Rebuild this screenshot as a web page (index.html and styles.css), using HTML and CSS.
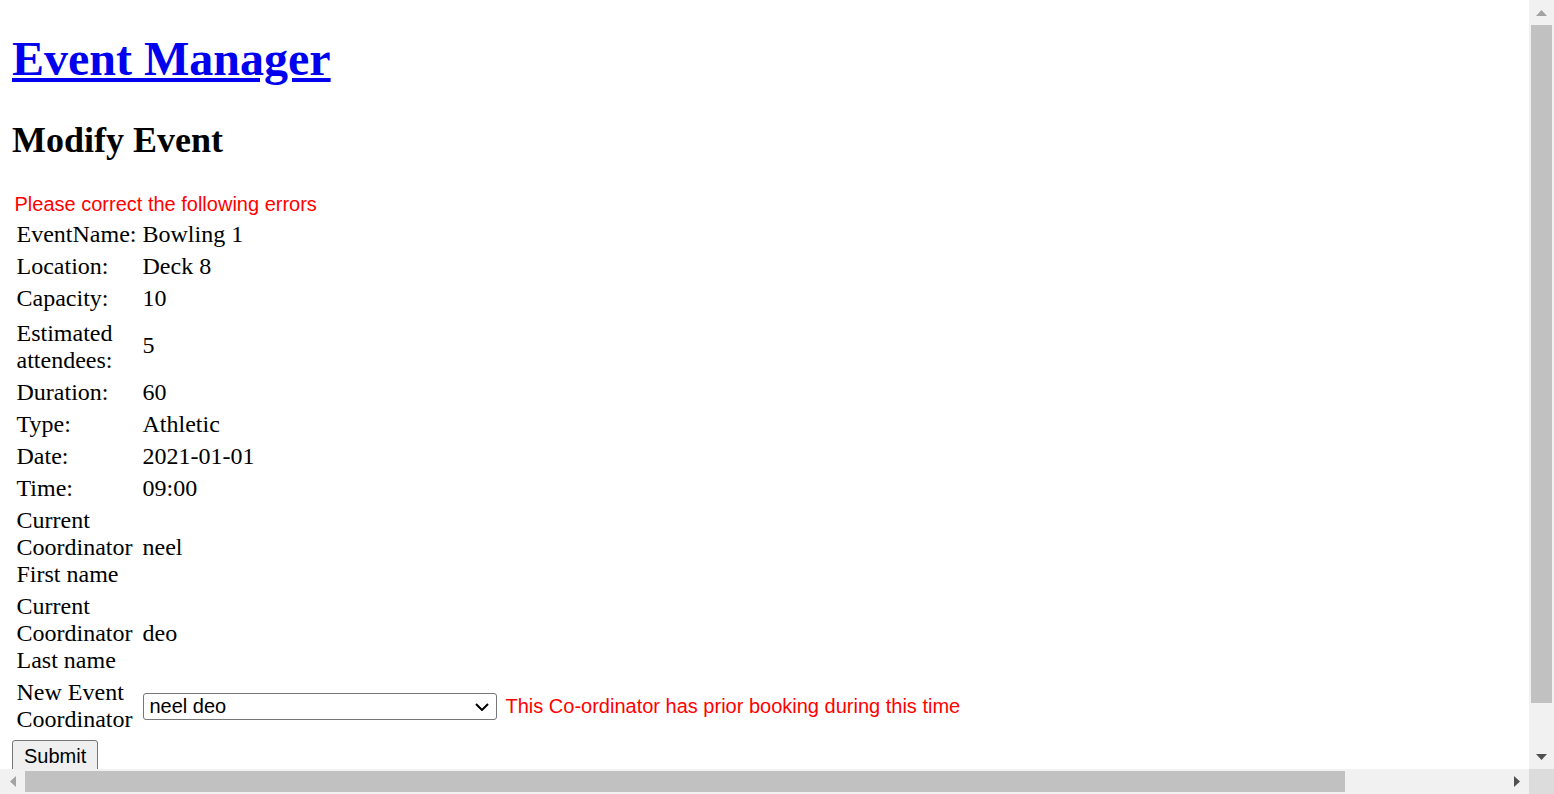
FILE: index.html
```html
<!DOCTYPE html>
<html lang="en">
<head>
<meta charset="utf-8">
<title>Event Manager - Modify Event</title>
<link rel="stylesheet" href="styles.css">
</head>
<body>
<h1 class="site-title"><a href="#">Event Manager</a></h1>
<h2 class="page-title">Modify Event</h2>
<form class="event-form">
  <div class="form-error">Please correct the following errors</div>
  <table class="details">
    <tr><td class="label">EventName:</td><td class="value">Bowling 1</td></tr>
    <tr><td class="label">Location:</td><td class="value">Deck 8</td></tr>
    <tr><td class="label">Capacity:</td><td class="value">10</td></tr>
    <tr class="tall-row"><td class="label">Estimated attendees:</td><td class="value">5</td></tr>
    <tr><td class="label">Duration:</td><td class="value">60</td></tr>
    <tr><td class="label">Type:</td><td class="value">Athletic</td></tr>
    <tr><td class="label">Date:</td><td class="value">2021-01-01</td></tr>
    <tr><td class="label">Time:</td><td class="value">09:00</td></tr>
    <tr><td class="label">Current Coordinator First name</td><td class="value">neel</td></tr>
    <tr><td class="label">Current Coordinator Last name</td><td class="value">deo</td></tr>
    <tr>
      <td class="label">New Event Coordinator</td>
      <td class="value">
        <div class="select-row">
          <span class="select-wrap">
            <select class="coordinator-select">
              <option>neel deo</option>
            </select>
            <svg class="chevron" width="14" height="8" viewBox="0 0 14 8"><path d="M1 1 L7 7 L13 1" fill="none" stroke="#000" stroke-width="2"/></svg>
          </span>
          <span class="field-error">This Co-ordinator has prior booking during this time</span>
        </div>
      </td>
    </tr>
  </table>
  <button type="submit" class="submit-btn">Submit</button>
</form>

<div class="vscroll" aria-hidden="true">
  <div class="sb-btn"><svg width="11" height="6" viewBox="0 0 11 6"><polygon points="0,6 5.5,0 11,6" fill="#a3a3a3"/></svg></div>
  <div class="vtrack"><div class="vthumb"></div></div>
  <div class="sb-btn"><svg width="11" height="6" viewBox="0 0 11 6"><polygon points="0,0 11,0 5.5,6" fill="#505050"/></svg></div>
</div>
<div class="hscroll" aria-hidden="true">
  <div class="sb-btn"><svg width="6" height="11" viewBox="0 0 6 11"><polygon points="6,0 6,11 0,5.5" fill="#a3a3a3"/></svg></div>
  <div class="htrack"><div class="hthumb"></div></div>
  <div class="sb-btn"><svg width="6" height="11" viewBox="0 0 6 11"><polygon points="0,0 6,5.5 0,11" fill="#505050"/></svg></div>
</div>
<div class="sb-corner" aria-hidden="true"></div>
</body>
</html>
```
FILE: styles.css
```css
html {
  background: #fff;
}
body {
  margin: 12px;
  font-family: "Liberation Serif", "Times New Roman", serif;
  font-size: 24px;
  color: #000;
}
.site-title {
  font-size: 48px;
  font-weight: bold;
  margin: 19px 0 33px;
}
.site-title a {
  color: #0000ee;
  text-decoration: underline;
}
.page-title {
  font-size: 36px;
  font-weight: bold;
  margin: 30px 0;
}
.event-form {
  margin: 0;
}
.form-error {
  font-family: "Liberation Sans", Arial, sans-serif;
  font-size: 20px;
  line-height: 23px;
  color: #ff0000;
  padding: 2px 0 0 2.5px;
}
.details {
  border-collapse: separate;
  border-spacing: 3px;
  margin-top: 1px;
}
.details td {
  padding: 1px 1.5px;
  line-height: 27px;
  vertical-align: middle;
}
.details .label {
  width: 120px;
}
.details .tall-row .label {
  padding-top: 4px;
}
.select-row {
  display: flex;
  align-items: center;
  gap: 9px;
}
.select-wrap {
  position: relative;
  display: inline-block;
}
.coordinator-select {
  appearance: none;
  -webkit-appearance: none;
  display: block;
  width: 354px;
  height: 27px;
  margin: 0;
  padding: 0 30px 0 6px;
  border: 1px solid #767676;
  border-radius: 3px;
  background: #fff;
  font-family: "Liberation Sans", Arial, sans-serif;
  font-size: 20px;
  color: #000;
}
.chevron {
  position: absolute;
  right: 8px;
  top: 10px;
  pointer-events: none;
}
.field-error {
  font-family: "Liberation Sans", Arial, sans-serif;
  font-size: 20px;
  line-height: 23px;
  color: #ff0000;
}
.submit-btn {
  display: block;
  margin: 3px 0 0;
  height: 32px;
  padding: 0 11px;
  border: 1px solid #767676;
  border-radius: 3px;
  background: #efefef;
  font-family: "Liberation Sans", Arial, sans-serif;
  font-size: 20px;
  color: #000;
}

/* window scrollbars */
.vscroll {
  position: fixed;
  top: 0;
  right: 0;
  width: 25px;
  height: 769px;
  display: flex;
  flex-direction: column;
  background: #f1f1f1;
}
.hscroll {
  position: fixed;
  left: 0;
  bottom: 0;
  width: 1529px;
  height: 25px;
  display: flex;
  background: #f1f1f1;
}
.sb-btn {
  flex: 0 0 25px;
  width: 25px;
  height: 25px;
  display: flex;
  align-items: center;
  justify-content: center;
}
.sb-btn svg {
  display: block;
}
.vtrack {
  flex: 1;
  padding: 0 2px;
}
.vthumb {
  height: 678px;
  background: #c1c1c1;
}
.htrack {
  flex: 1;
  padding: 2px 0;
}
.hthumb {
  width: 1320px;
  height: 100%;
  background: #c1c1c1;
}
.sb-corner {
  position: fixed;
  right: 0;
  bottom: 0;
  width: 25px;
  height: 25px;
  background: #dcdcdc;
}
```
